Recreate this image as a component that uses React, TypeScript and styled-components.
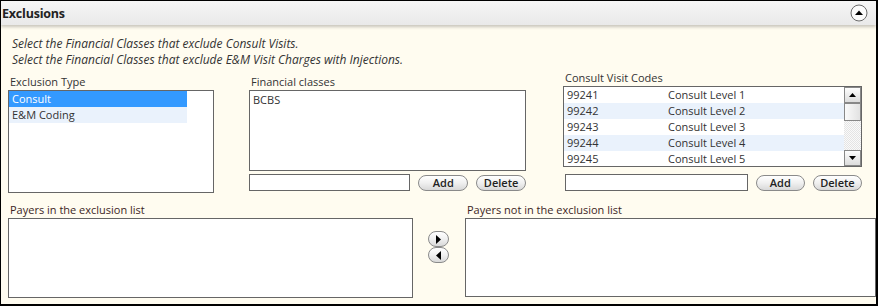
import React from 'react';
import styled, { createGlobalStyle } from 'styled-components';

const GlobalStyle = createGlobalStyle`
  html, body {
    margin: 0;
    padding: 0;
    background: #ffffff;
  }
  body {
    font-family: "Open Sans", "Noto Sans", sans-serif;
    font-size: 11px;
    color: #333;
  }
`;

const Panel = styled.div`
  width: 878px;
  height: 306px;
  box-sizing: border-box;
  border-top: 1px solid #000;
  border-left: 1px solid #000;
  border-right: 2px solid #000;
  border-bottom: 2px solid #000;
  background: #fffcf0;
  display: flex;
  flex-direction: column;
  overflow: hidden;
`;

const Header = styled.div`
  height: 24px;
  flex: none;
  display: flex;
  align-items: center;
  justify-content: space-between;
  padding: 0 8px 0 1px;
  background: linear-gradient(#f6f6f6, #e9e9e9);
  box-shadow: 0 2px 3px rgba(0, 0, 0, 0.22);
  position: relative;
  z-index: 1;
`;

const Title = styled.div`
  font-size: 12.5px;
  font-weight: 700;
  color: #222;
  letter-spacing: -0.2px;
`;

const CollapseButton = styled.div`
  width: 18px;
  height: 18px;
  display: flex;
`;

const Body = styled.div`
  flex: 1;
  padding: 11px 0 0 7px;
  display: flex;
  flex-direction: column;
`;

const Intro = styled.div`
  padding-left: 4px;
  font-style: italic;
  font-size: 12px;
  line-height: 16px;
  color: #333;
  margin-bottom: 6px;
`;

const TopRow = styled.div`
  display: grid;
  grid-template-columns: 206px 277px 301px;
  column-gap: 35px;
  align-items: start;
`;

const Column = styled.div<{ $raised?: boolean; $indent?: number }>`
  display: flex;
  flex-direction: column;
  margin-top: ${({ $raised }) => ($raised ? '-4px' : '0')};
  margin-left: ${({ $indent }) => $indent ?? 0}px;
`;

const Label = styled.div<{ $accent?: boolean }>`
  line-height: 16px;
  height: 16px;
  padding-left: 2px;
  color: ${({ $accent }) => ($accent ? '#3d1f1f' : '#333')};
`;

const ListBox = styled.div<{ $h: number }>`
  height: ${({ $h }) => $h}px;
  box-sizing: border-box;
  border: 1px solid #666;
  background: #fff;
  position: relative;
  overflow: hidden;
`;

const ListItem = styled.div<{ $selected?: boolean; $alt?: boolean; $w?: number }>`
  height: 16px;
  line-height: 16px;
  padding-left: 3px;
  width: ${({ $w }) => ($w ? `${$w}px` : 'auto')};
  box-sizing: border-box;
  color: ${({ $selected }) => ($selected ? '#fff' : '#333')};
  background: ${({ $selected, $alt }) =>
    $selected ? '#3399ff' : $alt ? '#eaf2fc' : 'transparent'};
`;

const PlainItem = styled.div`
  line-height: 16px;
  padding: 1px 0 0 3px;
`;

const CodeRow = styled.div<{ $alt?: boolean }>`
  height: 16px;
  line-height: 16px;
  width: 280px;
  display: grid;
  grid-template-columns: 101px 1fr;
  padding-left: 3px;
  box-sizing: border-box;
  background: ${({ $alt }) => ($alt ? '#eaf2fc' : 'transparent')};
`;

const CodesInner = styled.div`
  display: flex;
  height: 100%;
  justify-content: space-between;
`;

const Scrollbar = styled.div`
  width: 17px;
  display: flex;
  flex-direction: column;
  background-color: #f2f2f2;
  background-image: repeating-conic-gradient(#e4e4e4 0 25%, #fafafa 0 50%);
  background-size: 2px 2px;
`;

const ScrollArrow = styled.div`
  height: 16px;
  box-sizing: border-box;
  border: 1px solid #888;
  background: linear-gradient(#fdfdfd, #dcdcdc);
  display: flex;
  align-items: center;
  justify-content: center;
`;

const ScrollThumb = styled.div`
  height: 18px;
  box-sizing: border-box;
  border: 1px solid #888;
  background: linear-gradient(90deg, #fafafa, #e2e2e2);
`;

const ScrollTrack = styled.div`
  flex: 1;
`;

const EntryRow = styled.div<{ $gap: number; $indent?: number }>`
  display: flex;
  align-items: center;
  margin-top: ${({ $gap }) => $gap}px;
  margin-left: ${({ $indent }) => $indent ?? 0}px;
  gap: 8px;
`;

const TextInput = styled.div<{ $w: number }>`
  width: ${({ $w }) => $w}px;
  height: 17px;
  box-sizing: border-box;
  border: 1px solid #666;
  background: #fff;
`;

const PillButton = styled.div<{ $w?: number }>`
  width: ${({ $w }) => ($w ? `${$w}px` : '50px')};
  height: 16px;
  box-sizing: border-box;
  border: 1px solid #8a8a8a;
  border-radius: 8px;
  background: linear-gradient(#ffffff 0%, #f0f0f0 50%, #d8d8d8 100%);
  display: flex;
  align-items: center;
  justify-content: center;
  font-weight: 600;
  font-size: 11px;
  color: #222;
  line-height: 14px;
`;

const BottomRow = styled.div`
  display: grid;
  grid-template-columns: 405px 52px 411px;
  margin-top: 9px;
  align-items: start;
`;

const MoveButtons = styled.div`
  display: flex;
  flex-direction: column;
  align-items: center;
  padding-top: 29px;
  padding-right: 1px;
`;

const Spacer = styled.div`
  flex: 1;
`;

const ArrowUp = ({ down }: { down?: boolean }) => (
  <svg width="7" height="4" viewBox="0 0 7 4">
    <polygon points={down ? '0,0 7,0 3.5,4' : '0,4 7,4 3.5,0'} fill="#000" />
  </svg>
);

const SideArrow = ({ left }: { left?: boolean }) => (
  <svg width="5" height="9" viewBox="0 0 5 9">
    <polygon points={left ? '5,0 5,9 0,4.5' : '0,0 0,9 5,4.5'} fill="#000" />
  </svg>
);

const codes = [
  ['99241', 'Consult Level 1'],
  ['99242', 'Consult Level 2'],
  ['99243', 'Consult Level 3'],
  ['99244', 'Consult Level 4'],
  ['99245', 'Consult Level 5'],
];

export default function App() {
  return (
    <>
      <GlobalStyle />
      <Panel>
        <Header>
          <Title>Exclusions</Title>
          <CollapseButton>
            <svg width="18" height="18" viewBox="0 0 18 18">
              <circle cx="9" cy="9" r="8" fill="#fbfbfb" stroke="#6a6a6a" strokeWidth="1" />
              <polygon points="5,11 13,11 9,6.5" fill="#000" />
            </svg>
          </CollapseButton>
        </Header>
        <Body>
          <Intro>
            Select the Financial Classes that exclude Consult Visits.
            <br />
            Select the Financial Classes that exclude E&amp;M Visit Charges with Injections.
          </Intro>
          <TopRow>
            <Column>
              <Label>Exclusion Type</Label>
              <ListBox $h={103}>
                <ListItem $selected $w={178}>Consult</ListItem>
                <ListItem $alt $w={178}>E&amp;M Coding</ListItem>
              </ListBox>
            </Column>
            <Column>
              <Label>Financial classes</Label>
              <ListBox $h={81}>
                <PlainItem>BCBS</PlainItem>
              </ListBox>
              <EntryRow $gap={3}>
                <TextInput $w={162} />
                <PillButton>Add</PillButton>
                <PillButton>Delete</PillButton>
              </EntryRow>
            </Column>
            <Column $raised $indent={2}>
              <Label>Consult Visit Codes</Label>
              <ListBox $h={81}>
                <CodesInner>
                  <div>
                    {codes.map(([code, name], i) => (
                      <CodeRow key={code} $alt={i % 2 === 1}>
                        <span>{code}</span>
                        <span>{name}</span>
                      </CodeRow>
                    ))}
                  </div>
                  <Scrollbar>
                    <ScrollArrow>
                      <ArrowUp />
                    </ScrollArrow>
                    <ScrollThumb />
                    <ScrollTrack />
                    <ScrollArrow>
                      <ArrowUp down />
                    </ScrollArrow>
                  </Scrollbar>
                </CodesInner>
              </ListBox>
              <EntryRow $gap={7} $indent={2}>
                <TextInput $w={186} />
                <PillButton>Add</PillButton>
                <PillButton>Delete</PillButton>
              </EntryRow>
            </Column>
          </TopRow>
          <BottomRow>
            <Column>
              <Label $accent>Payers in the exclusion list</Label>
              <ListBox $h={80} />
            </Column>
            <MoveButtons>
              <PillButton $w={21}>
                <SideArrow />
              </PillButton>
              <PillButton $w={21}>
                <SideArrow left />
              </PillButton>
            </MoveButtons>
            <Column>
              <Label $accent>Payers not in the exclusion list</Label>
              <ListBox $h={79} />
            </Column>
          </BottomRow>
          <Spacer />
        </Body>
      </Panel>
    </>
  );
}
